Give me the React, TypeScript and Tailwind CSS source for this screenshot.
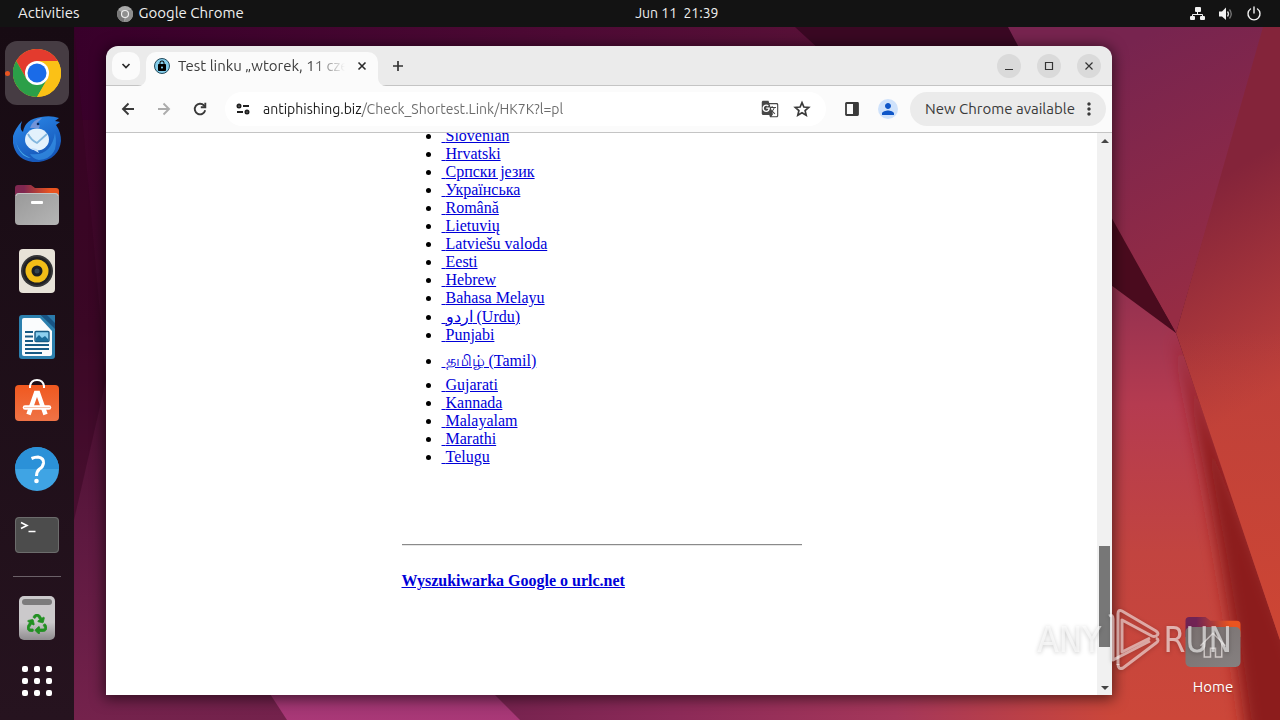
import type { ReactNode } from 'react'
import { MdGTranslate, MdLock, MdMoreVert, MdPerson } from 'react-icons/md'
import { FaRecycle } from 'react-icons/fa'

interface LanguageLink {
  label: string
  className?: string
}

const languages: LanguageLink[] = [
  { label: 'Slovenian' },
  { label: 'Hrvatski' },
  { label: 'Српски језик' },
  { label: 'Українська' },
  { label: 'Română' },
  { label: 'Lietuvių' },
  { label: 'Latviešu valoda' },
  { label: 'Eesti' },
  { label: 'Hebrew' },
  { label: 'Bahasa Melayu' },
  { label: 'اردو (Urdu)', className: 'leading-[19px]' },
  { label: 'Punjabi' },
  { label: 'தமிழ் (Tamil)', className: 'pt-0.5 leading-[30px]' },
  { label: 'Gujarati' },
  { label: 'Kannada' },
  { label: 'Malayalam' },
  { label: 'Marathi' },
  { label: 'Telugu' },
]

function Wallpaper() {
  return (
    <svg
      aria-hidden="true"
      className="absolute inset-0 h-full w-full"
      viewBox="0 0 1280 720"
      preserveAspectRatio="none"
    >
      <defs>
        <linearGradient id="base" x1="0" y1="0" x2="0" y2="1">
          <stop offset="0" stopColor="#3a0027" />
          <stop offset="0.45" stopColor="#400a2a" />
          <stop offset="0.75" stopColor="#5e1940" />
          <stop offset="1" stopColor="#74224c" />
        </linearGradient>
        <linearGradient id="top" x1="0" y1="0" x2="1" y2="0">
          <stop offset="0" stopColor="#38002a" />
          <stop offset="0.5" stopColor="#4e0a35" />
          <stop offset="0.8" stopColor="#5a1238" />
          <stop offset="1" stopColor="#3d0a24" />
        </linearGradient>
        <linearGradient id="bottom" gradientUnits="userSpaceOnUse" x1="480" y1="0" x2="1120" y2="0">
          <stop offset="0" stopColor="#74224e" />
          <stop offset="0.3" stopColor="#8c2a58" />
          <stop offset="0.65" stopColor="#a5375a" />
          <stop offset="1" stopColor="#cc4739" />
        </linearGradient>
        <linearGradient id="upper" gradientUnits="userSpaceOnUse" x1="1090" y1="60" x2="1200" y2="300">
          <stop offset="0" stopColor="#77244f" />
          <stop offset="1" stopColor="#962c44" />
        </linearGradient>
        <linearGradient id="right" gradientUnits="userSpaceOnUse" x1="1200" y1="190" x2="1310" y2="370">
          <stop offset="0" stopColor="#84243a" />
          <stop offset="1" stopColor="#bd403b" />
        </linearGradient>
        <linearGradient id="rightLow" gradientUnits="userSpaceOnUse" x1="0" y1="330" x2="0" y2="620">
          <stop offset="0" stopColor="#cc4534" stopOpacity="0" />
          <stop offset="1" stopColor="#cc4534" />
        </linearGradient>
        <linearGradient id="lower" gradientUnits="userSpaceOnUse" x1="0" y1="300" x2="0" y2="720">
          <stop offset="0" stopColor="#973250" />
          <stop offset="0.25" stopColor="#b53b50" />
          <stop offset="0.6" stopColor="#c24440" />
          <stop offset="1" stopColor="#cc4739" />
        </linearGradient>
        <linearGradient id="pink" x1="0" y1="0" x2="0" y2="1">
          <stop offset="0" stopColor="#8c3066" />
          <stop offset="1" stopColor="#a93877" />
        </linearGradient>
        <filter id="soften" filterUnits="userSpaceOnUse" x="1100" y="280" width="260" height="520">
          <feGaussianBlur stdDeviation="8" />
        </filter>
      </defs>
      <rect width="1280" height="720" fill="url(#base)" />
      <path d="M74 27H1010L1060 120H74Z" fill="url(#top)" />
      <path d="M795 27H1010L1024 50H820Z" fill="#3a0823" />
      <path d="M74 27L106 380L74 520Z" fill="#32041f" opacity="0.45" />
      <path d="M480 680H1120V720H480Z" fill="url(#bottom)" />
      <path d="M248 660H460L520 720H287Z" fill="url(#pink)" />
      <path d="M1110 270L1176 333L1280 640V720H1110Z" fill="url(#lower)" />
      <path d="M1176 333L1310 690V780H1252Q1226 560 1176 333Z" fill="#8c1f1b" filter="url(#soften)" />
      <path d="M1008 27H1265L1176 333L1100 200Z" fill="url(#upper)" />
      <path d="M1263 27H1280V640L1176 333Z" fill="url(#right)" />
      <path d="M1176 333H1280V640Z" fill="url(#rightLow)" />
      <path d="M1100 197L1176 333L1100 277Z" fill="#4a0b1e" />
    </svg>
  )
}

function NetworkIcon() {
  return (
    <svg viewBox="0 0 16 16" className="size-4" fill="#f2f2f2">
      <rect x="5" y="1" width="6" height="5" rx="1" />
      <rect x="0" y="10" width="5" height="4" rx="1" />
      <rect x="10" y="10" width="5" height="4" rx="1" />
      <path d="M7.5 5v3.500M2.500 11V8.500H12.500V11" fill="none" stroke="#f2f2f2" />
    </svg>
  )
}

function VolumeIcon() {
  return (
    <svg viewBox="0 0 16 16" className="size-4">
      <path d="M1 5.500H4L8 1.500V14L4 10.500H1Z" fill="#f2f2f2" />
      <path d="M9.500 5.500Q11.500 8 9.500 10.500" fill="none" stroke="#ddd" strokeWidth="1.300" />
      <path d="M11.500 3.500Q15 8 11.500 12.500" fill="none" stroke="#777" strokeWidth="1.300" />
    </svg>
  )
}

function PowerIcon() {
  return (
    <svg viewBox="0 0 16 16" className="size-4" fill="none" stroke="#f2f2f2" strokeWidth="1.400" strokeLinecap="round">
      <path d="M4.500 3A6 6 0 1 0 11.500 3M8 1V7" />
    </svg>
  )
}

function TopBar() {
  return (
    <header className="relative z-10 flex h-[27px] shrink-0 items-center bg-[#131313] px-[18px] text-[15px] text-[#efefef]">
      <button type="button">Activities</button>
      <button type="button" className="ml-[37px] flex items-center gap-1.5">
        <svg viewBox="0 0 16 16" className="size-4">
          <circle cx="8" cy="8" r="8" fill="#a9a9a9" />
          <path d="M8 8L1.200 4A8 8 0 0 0 7 16Z" fill="#777" />
          <path d="M8 4H15A8 8 0 0 1 7 16L11 9Z" fill="#8d8d8d" />
          <circle cx="8" cy="8" r="3.500" fill="#8f8f8f" stroke="#eee" strokeWidth="1.200" />
        </svg>
        Google Chrome
      </button>
      <div className="flex-1 pr-20 text-center">
        <time className="text-sm whitespace-pre">Jun 11  21:39</time>
      </div>
      <button type="button" aria-label="System menu" className="flex items-center gap-3">
        <NetworkIcon />
        <VolumeIcon />
        <PowerIcon />
      </button>
    </header>
  )
}

function ChromeIcon() {
  return (
    <svg viewBox="0 0 48 48" className="size-12">
      <circle cx="24" cy="24" r="24" fill="#fbc116" />
      <path d="M3.200 12A24 24 0 0 1 44.800 12H24L13.600 30Z" fill="#e33b2e" />
      <path d="M3.200 12A24 24 0 0 0 24 48L34.400 30L24 36L13.600 30Z" fill="#2b9f48" />
      <path d="M24 12H44.800A24 24 0 0 1 24 48L34.400 30Z" fill="#fbc116" />
      <circle cx="24" cy="24" r="12" fill="#fff" />
      <circle cx="24" cy="24" r="9.500" fill="#1a6be8" />
    </svg>
  )
}

function ThunderbirdIcon() {
  return (
    <svg viewBox="0 0 48 48" className="size-12">
      <defs>
        <linearGradient id="bird" x1="0.2" y1="0" x2="0.7" y2="1">
          <stop offset="0" stopColor="#2a87e8" />
          <stop offset="1" stopColor="#1452b4" />
        </linearGradient>
      </defs>
      <path
        d="M0 21Q2 14 9 6Q6 15 10 17Q12 4 28 2Q38 0 46 3L42 6L47 7L43 10Q48 17 48 26Q46 44 26 47Q8 48 2 35Q-1 28 0 21Z"
        fill="url(#bird)"
      />
      <path d="M17 13Q20 4 29 3L24 8Q28 10 26 13Z" fill="#7394d8" />
      <path d="M2 22Q4 38 18 43Q5 42 2 22Z" fill="#51b9ef" opacity="0.8" />
      <path d="M17 39Q38 42 42 18Q47 43 26 45Q20 44 17 39Z" fill="#3c9bed" opacity="0.6" />
      <ellipse cx="24" cy="24.500" rx="12" ry="11" fill="#e3f1fc" />
      <path d="M15 19Q18 25 24 28L34 19" fill="none" stroke="#83b7de" strokeWidth="1.800" />
      <path d="M18 33Q22 36 26 38L24 34Z" fill="#c4dffb" />
      <circle cx="25" cy="9" r="1.300" fill="#0c2d61" />
    </svg>
  )
}

function FolderIcon({ home = false }: { home?: boolean }) {
  const id = home ? 'home-folder' : 'files-folder'

  return (
    <svg viewBox="0 0 48 48" className={home ? 'size-[60px]' : 'size-12'}>
      <defs>
        <linearGradient id={`${id}-back`} x1="0" y1="0" x2="1" y2="0">
          <stop offset="0.2" stopColor={home ? '#712354' : '#7f2750'} />
          <stop offset="0.8" stopColor="#e95420" />
        </linearGradient>
        <linearGradient id={`${id}-front`} x1="0" y1="0" x2="1" y2="1">
          <stop offset="0" stopColor={home ? '#79706f' : '#999'} />
          <stop offset="1" stopColor={home ? '#858080' : '#b5b5b5'} />
        </linearGradient>
      </defs>
      <path d="M2 7Q2 4 5 4H18L22 7H43Q46 7 46 10V20H2Z" fill={`url(#${id}-back)`} />
      <rect x="2" y="12" width="44" height="32" rx="4" fill={`url(#${id}-front)`} />
      {home ? (
        <path d="M14 27L24 17L34 27M17 25V36H22V29H26V36H31V25" fill="none" stroke="#d0c9c8" strokeWidth="1.200" />
      ) : (
        <>
          <path d="M3 15Q3 12.500 6 12.500H42Q45 12.500 45 15" fill="none" stroke="#c4c4c4" />
          <rect x="18" y="20" width="12" height="3" rx="1" fill="#fff" />
        </>
      )}
    </svg>
  )
}

function RhythmboxIcon() {
  return (
    <svg viewBox="0 0 48 48" className="size-12">
      <rect x="6" y="2" width="36" height="44" rx="4" fill="#e7e2d8" />
      <circle cx="24" cy="24" r="16" fill="#353537" />
      <circle cx="24" cy="24" r="14" fill="#202023" />
      <circle cx="24" cy="24" r="11.500" fill="#f2bd17" />
      <circle cx="24" cy="24" r="5.500" fill="#1b1f24" />
      <circle cx="24" cy="24" r="2.500" fill="#34434f" />
    </svg>
  )
}

function WriterIcon() {
  return (
    <svg viewBox="0 0 48 48" className="size-12">
      <path d="M28 2H42V17Z" fill="#185484" />
      <path d="M34 2H42V10Z" fill="#2b7aab" />
      <path d="M9 2H28L42 16V43Q42 46 39 46H9Q6 46 6 43V5Q6 2 9 2Z" fill="#2c80ae" />
      <path d="M11 5H27L39 18V41Q39 43 37 43H11Q9 43 9 41V7Q9 5 11 5Z" fill="#fafcfd" />
      <path d="M12 19H20M12 23.500H20M12 28H20M12 32H36M12 36H36M12 40H29" stroke="#175b85" strokeWidth="2" />
      <rect x="22" y="18.500" width="14" height="10" rx="1" fill="#8dd0ef" stroke="#175b85" strokeWidth="1.400" />
      <path d="M23 28V25L26 22L29 25L32 23L35 26V28Z" fill="#1b6d9b" />
    </svg>
  )
}

function SoftwareIcon() {
  return (
    <svg viewBox="0 0 48 48" className="size-12">
      <defs>
        <linearGradient id="bag" x1="0" y1="0" x2="0" y2="1">
          <stop offset="0" stopColor="#f0581f" />
          <stop offset="1" stopColor="#ef7346" />
        </linearGradient>
      </defs>
      <rect x="2" y="6" width="44" height="36" rx="4" fill="url(#bag)" />
      <path d="M17 9V7Q18 1 24 1T31 7V9" fill="none" stroke="#fff" strokeWidth="2" />
      <path d="M15.500 35.500L23 14H25L32.500 35.500" fill="none" stroke="#fff" strokeWidth="4.500" />
      <path d="M12 28.500H36" stroke="#fff" strokeWidth="4.500" strokeLinecap="round" />
      <path d="M11 28.500H37" stroke="#f7c3ae" strokeWidth="1" />
    </svg>
  )
}

function HelpIcon() {
  return (
    <svg viewBox="0 0 48 48" className="size-12">
      <circle cx="24" cy="24" r="22" fill="#3fa4e4" />
      <path d="M2 24A22 22 0 0 1 46 24Z" fill="#2b91d8" />
      <path
        d="M18.500 13.500Q22 12 25 12Q31 13 30.500 18Q30 22 26.500 24Q23.500 26.500 23.500 31"
        fill="none"
        stroke="#fff"
        strokeWidth="3"
      />
      <circle cx="23.500" cy="36" r="2.300" fill="#fff" />
    </svg>
  )
}

function TerminalIcon() {
  return (
    <svg viewBox="0 0 48 48" className="size-12">
      <rect x="2" y="6" width="44" height="36" rx="4" fill="#4c4c4c" />
      <rect x="2.500" y="6.500" width="43" height="35" rx="3.500" fill="none" stroke="#6c6c6c" />
      <path d="M8 11.500L14 14.500L8 17.500M15.500 20.500H22.500" fill="none" stroke="#fff" strokeWidth="1.600" />
    </svg>
  )
}

function TrashIcon() {
  return (
    <div className="relative flex size-12 items-center justify-center">
      <svg viewBox="0 0 48 48" className="size-12">
        <defs>
          <linearGradient id="bin" x1="0" y1="0" x2="0" y2="1">
            <stop offset="0.600" stopColor="#cbc9cb" />
            <stop offset="1" stopColor="#8f8c8f" />
          </linearGradient>
        </defs>
        <rect x="6" y="2" width="36" height="44" rx="5" fill="url(#bin)" />
        <rect x="9" y="5" width="30" height="6" rx="3" fill="#7c7b7c" />
      </svg>
      <FaRecycle className="absolute bottom-2 size-5 stroke-current stroke-[20px] text-[#229022]" />
    </div>
  )
}

function AppGridIcon() {
  return (
    <svg viewBox="0 0 48 48" className="size-12" fill="#fff">
      {[12, 24, 36].map((y) =>
        [9, 21, 33].map((x) => <rect key={`${x}-${y}`} x={x} y={y - 3} width="6" height="6" rx="2" />),
      )}
    </svg>
  )
}

const dockApps: { name: string; icon: ReactNode; active?: boolean }[] = [
  { name: 'Google Chrome', icon: <ChromeIcon />, active: true },
  { name: 'Thunderbird Mail', icon: <ThunderbirdIcon /> },
  { name: 'Files', icon: <FolderIcon /> },
  { name: 'Rhythmbox', icon: <RhythmboxIcon /> },
  { name: 'LibreOffice Writer', icon: <WriterIcon /> },
  { name: 'Software', icon: <SoftwareIcon /> },
  { name: 'Help', icon: <HelpIcon /> },
  { name: 'Terminal', icon: <TerminalIcon /> },
]

function Dock() {
  return (
    <nav className="relative flex w-[74px] shrink-0 flex-col items-center bg-[#1c0e17] bg-linear-to-b from-[#170b13] to-[#26131f] pt-3.5">
      <div className="flex flex-col gap-0.5">
        {dockApps.map((app) => (
          <button
            key={app.name}
            type="button"
            aria-label={app.name}
            className={
              app.active
                ? 'relative flex size-16 items-center justify-center rounded-xl bg-[#463c43]'
                : 'flex size-16 items-center justify-center'
            }
          >
            {app.active ? <span className="absolute left-0 size-[5px] rounded-full bg-[#e95420]" /> : null}
            {app.icon}
          </button>
        ))}
      </div>
      <div className="my-[9px] h-px w-12 bg-[#6b6168]" />
      <button type="button" aria-label="Trash" className="flex size-16 items-center justify-center">
        <TrashIcon />
      </button>
      <button type="button" aria-label="Show Applications" className="flex h-[62px] w-16 items-center justify-center">
        <AppGridIcon />
      </button>
    </nav>
  )
}

function TabStrip() {
  return (
    <div className="flex h-10 items-end border-b border-[#c4c4c4] bg-[#ebebeb] pl-1.5">
      <button
        type="button"
        aria-label="Search tabs"
        className="mb-[5px] flex size-7 items-center justify-center rounded-[10px] bg-[#fbfbfb]"
      >
        <svg viewBox="0 0 10 10" className="size-2.5" fill="none" stroke="#2b2b2b" strokeWidth="1.700">
          <path d="M1.500 3L5 6.500L8.500 3" />
        </svg>
      </button>
      <div className="relative -mb-px ml-1.5 flex h-[34px] w-[232px] items-center rounded-t-[10px] bg-[#fbfbfb] px-2 pb-1.5">
        <svg viewBox="0 0 8 8" className="absolute bottom-0 -left-2 size-2" fill="#fbfbfb">
          <path d="M8 0V8H0A8 8 0 0 0 8 0Z" />
        </svg>
        <svg viewBox="0 0 8 8" className="absolute -right-2 bottom-0 size-2" fill="#fbfbfb">
          <path d="M0 0V8H8A8 8 0 0 1 0 0Z" />
        </svg>
        <span className="flex size-4 items-center justify-center rounded-full border border-[#234a5c] bg-[#84cdea]">
          <MdLock className="size-3 text-black" />
        </span>
        <span className="ml-2 w-[168px] overflow-hidden mask-r-from-80% text-[15px] leading-5 whitespace-nowrap text-[#3c3c3c]">
          Test linku „wtorek, 11 czerwca
        </span>
        <button type="button" aria-label="Close tab" className="ml-[9px] flex size-4 shrink-0 items-center justify-center">
          <svg viewBox="0 0 10 10" className="size-2.5" stroke="#2b2b2b" strokeWidth="1.600">
            <path d="M1.500 1.500L8.500 8.500M8.500 1.500L1.500 8.500" />
          </svg>
        </button>
      </div>
      <button type="button" aria-label="New tab" className="mb-[5px] ml-1.5 flex size-7 items-center justify-center">
        <svg viewBox="0 0 12 12" className="size-3" stroke="#333" strokeWidth="1.700">
          <path d="M6 1V11M1 6H11" />
        </svg>
      </button>
      <div className="mr-[11px] mb-[7px] ml-auto flex gap-4">
        <WindowButton label="Minimize" path="M2 9.500H10" />
        <WindowButton label="Maximize" path="M2.500 2.500H9.500V9.500H2.500Z" />
        <WindowButton label="Close" path="M2.500 2.500L9.500 9.500M9.500 2.500L2.500 9.500" />
      </div>
    </div>
  )
}

function WindowButton({ label, path }: { label: string; path: string }) {
  return (
    <button
      type="button"
      aria-label={label}
      className="flex size-6 items-center justify-center rounded-full bg-[#dadada]"
    >
      <svg viewBox="0 0 12 12" className="size-3" fill="none" stroke="#333" strokeWidth="1.200">
        <path d={path} />
      </svg>
    </button>
  )
}

function Toolbar() {
  return (
    <div className="flex h-[47px] items-center border-b border-[#c4c4c4] bg-[#fbfbfb] pr-1.5 pl-1">
      <button type="button" aria-label="Back" className="flex size-9 items-center justify-center text-[#3a3a3a]">
        <svg viewBox="0 0 16 16" className="size-4" fill="none" stroke="currentColor" strokeWidth="1.900">
          <path d="M14 8H3M8.500 2.500L3 8L8.500 13.500" />
        </svg>
      </button>
      <button type="button" aria-label="Forward" disabled className="flex size-9 items-center justify-center text-[#acacac]">
        <svg viewBox="0 0 16 16" className="size-4" fill="none" stroke="currentColor" strokeWidth="1.900">
          <path d="M2 8H13M7.500 2.500L13 8L7.500 13.500" />
        </svg>
      </button>
      <button type="button" aria-label="Reload" className="flex size-9 items-center justify-center text-[#3a3a3a]">
        <svg viewBox="0 0 16 16" className="size-4" fill="none" stroke="currentColor" strokeWidth="1.900">
          <path d="M13.200 9.300A5.300 5.300 0 1 1 12 4.500L13.500 6" />
          <path d="M13.300 1.800V6.300H8.800" />
        </svg>
      </button>
      <div className="mr-2 ml-[7px] flex h-[34px] flex-1 items-center rounded-full bg-white pr-2">
        <button type="button" aria-label="View site information" className="flex size-9 items-center justify-center">
          <svg viewBox="0 0 14 12" className="h-3 w-3.5" fill="none" stroke="#1f1f1f" strokeWidth="2">
            <circle cx="3" cy="3" r="1.500" />
            <path d="M7 3H13M1 9H7" />
            <circle cx="11" cy="9" r="1.500" />
          </svg>
        </button>
        <input
          type="text"
          aria-label="Address and search bar"
          defaultValue="antiphishing.biz/Check_Shortest.Link/HK7K?l=pl"
          className="ml-0.5 h-6 min-w-0 flex-1 bg-linear-to-r from-[#1a1a1a] from-[99px] to-[#6a6a6a] to-[99px] bg-clip-text text-sm text-transparent outline-none"
        />
        <button type="button" aria-label="Translate this page" className="flex size-8 items-center justify-center text-[#474747]">
          <MdGTranslate className="size-[18px]" />
        </button>
        <button type="button" aria-label="Bookmark this tab" className="flex size-8 items-center justify-center text-[#3a3a3a]">
          <svg viewBox="0 0 18 18" className="size-[18px]" fill="none" stroke="currentColor" strokeWidth="1.700">
            <path d="M9 2.600L10.900 7L15.700 7.400L12.100 10.600L13.200 15.300L9 12.800L4.800 15.300L5.900 10.600L2.300 7.400L7.100 7Z" />
          </svg>
        </button>
      </div>
      <button type="button" aria-label="Side panel" className="flex size-9 items-center justify-center">
        <svg viewBox="0 0 14 14" className="size-3.5">
          <rect x="1" y="1" width="12" height="12" rx="0.500" fill="none" stroke="#3a3a3a" strokeWidth="1.800" />
          <rect x="8" y="1" width="5" height="12" fill="#3a3a3a" />
        </svg>
      </button>
      <button type="button" aria-label="Profile" className="flex size-9 items-center justify-center">
        <span className="flex size-5 items-center justify-center rounded-full bg-[#cfe2fb]">
          <MdPerson className="size-[18px] text-[#0f56c8]" />
        </span>
      </button>
      <button
        type="button"
        className="ml-1 flex h-[34px] items-center rounded-full bg-[#ebebeb] pr-[7px] pl-[15px] text-[15px] text-[#3a3a3a]"
      >
        New Chrome available
        <MdMoreVert className="ml-1 size-5" />
      </button>
    </div>
  )
}

function Scrollbar() {
  return (
    <div className="flex w-[15px] shrink-0 flex-col bg-[#f1f1f1]">
      <button type="button" aria-label="Scroll up" className="flex h-[15px] items-center justify-center">
        <svg viewBox="0 0 8 4" className="h-1 w-2" fill="#454545">
          <path d="M4 0L8 4H0Z" />
        </svg>
      </button>
      <div className="flex flex-1 flex-col justify-end px-0.5 pb-[33px]">
        <div className="h-[101px] bg-[#777]" />
      </div>
      <button type="button" aria-label="Scroll down" className="flex h-[15px] items-center justify-center">
        <svg viewBox="0 0 8 4" className="h-1 w-2" fill="#454545">
          <path d="M0 0H8L4 4Z" />
        </svg>
      </button>
    </div>
  )
}

function PageContent() {
  return (
    <div className="flex min-h-0 flex-1 bg-white">
      <main className="flex-1 overflow-hidden font-['Liberation_Serif',serif] text-base leading-[18px] text-black">
        <div className="mx-auto -mt-1.5 w-[400px]">
          <ul className="list-disc pl-10">
            {languages.map((language) => (
              <li key={language.label} className={language.className}>
                <a href="#language" className="text-[#0000d8] underline">
                  {'\u00a0'}
                  {language.label}
                </a>
              </li>
            ))}
          </ul>
          <hr className="mt-[78px] mb-[26px] border-b border-t-[#8a8a8a] border-b-[#e6e6e6]" />
          <a href="#search" className="font-bold text-[#0000d8] underline">
            Wyszukiwarka Google o urlc.net
          </a>
        </div>
      </main>
      <Scrollbar />
    </div>
  )
}

function Watermark() {
  return (
    <div className="pointer-events-none absolute right-12 bottom-12 z-20 flex items-center font-['Liberation_Sans_Narrow','DejaVu_Sans_Condensed',sans-serif] text-[35px] leading-[62px] text-white/60 drop-shadow-[0_1px_2px_rgba(0,0,0,0.35)]">
      <span>ANY</span>
      <svg viewBox="0 0 54 64" className="mx-1 h-16 w-[54px]" fill="none" stroke="#fff" strokeOpacity="0.55" strokeWidth="3">
        <path d="M12 57V6Q12 1 16 3L50 23Q54 26 50 28Q48 29 46 28L16 12V44L44 30" strokeLinejoin="round" />
        <path d="M50 30Q54 32 50 35L17 60Q12 62 12 56M3 8Q7 6 7 11V52L44 33" strokeLinejoin="round" />
      </svg>
      <span>RUN</span>
    </div>
  )
}

export default function App() {
  return (
    <div className="relative flex h-screen flex-col overflow-hidden bg-[#3a0027] font-['Ubuntu','Noto_Sans',sans-serif]">
      <Wallpaper />
      <TopBar />
      <div className="relative flex min-h-0 flex-1">
        <Dock />
        <div className="relative flex min-w-0 flex-1 pt-[19px] pr-[168px] pb-[25px] pl-8">
          <section
            aria-label="Browser window"
            className="flex min-w-0 flex-1 flex-col overflow-hidden rounded-t-xl shadow-[0_2px_14px_2px_rgba(0,0,0,0.55)]"
          >
            <TabStrip />
            <Toolbar />
            <PageContent />
          </section>
          <button
            type="button"
            className="absolute right-8 bottom-[22px] flex w-[70px] flex-col items-center gap-1 text-[15px] text-white text-shadow-sm"
          >
            <FolderIcon home />
            <span>Home</span>
          </button>
        </div>
      </div>
      <Watermark />
    </div>
  )
}
